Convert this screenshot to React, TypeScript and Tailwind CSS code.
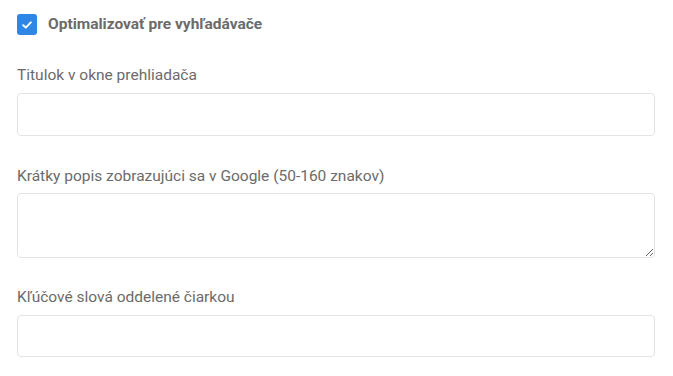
import { useState } from 'react';

const labelCls = 'block text-[15.5px] leading-[20px] text-[#6b6b6b]';
const fieldCls =
  'block w-full rounded-[4px] border border-[#e3e3e3] bg-white px-3 text-[15px] text-[#333] outline-none';

export default function App() {
  const [seo, setSeo] = useState(true);

  return (
    <div className="min-h-[376px] w-[673px] bg-white pl-[17px] pr-[18px] pt-[14px]" style={{ fontFamily: 'Roboto, "Noto Sans", sans-serif' }}>
      <label className="flex h-[21px] cursor-pointer items-center gap-[11px]">
        <span
          onClick={() => setSeo(!seo)}
          className="flex h-[21px] w-[20px] items-center justify-center rounded-[3px] bg-[#2f86e4]"
        >
          {seo && (
            <svg width="10" height="8" viewBox="0 0 10 8" fill="none">
              <path d="M1.2 4.2 L3.8 6.6 L8.8 1.4" stroke="white" strokeWidth="2" strokeLinecap="round" strokeLinejoin="round" />
            </svg>
          )}
        </span>
        <span className="text-[15.5px] font-bold text-[#6b6b6b]">Optimalizovať pre vyhľadávače</span>
      </label>

      <label className={`${labelCls} mt-[30px]`}>Titulok v okne prehliadača</label>
      <input type="text" className={`${fieldCls} mt-[8px] h-[43px]`} />

      <label className={`${labelCls} mt-[30px]`}>Krátky popis zobrazujúci sa v Google (50-160 znakov)</label>
      <textarea className={`${fieldCls} mt-[7px] h-[65px] py-2`} />

      <label className={`${labelCls} mt-[29px]`}>Kľúčové slová oddelené čiarkou</label>
      <input type="text" className={`${fieldCls} mt-[8px] h-[42px]`} />
    </div>
  );
}
